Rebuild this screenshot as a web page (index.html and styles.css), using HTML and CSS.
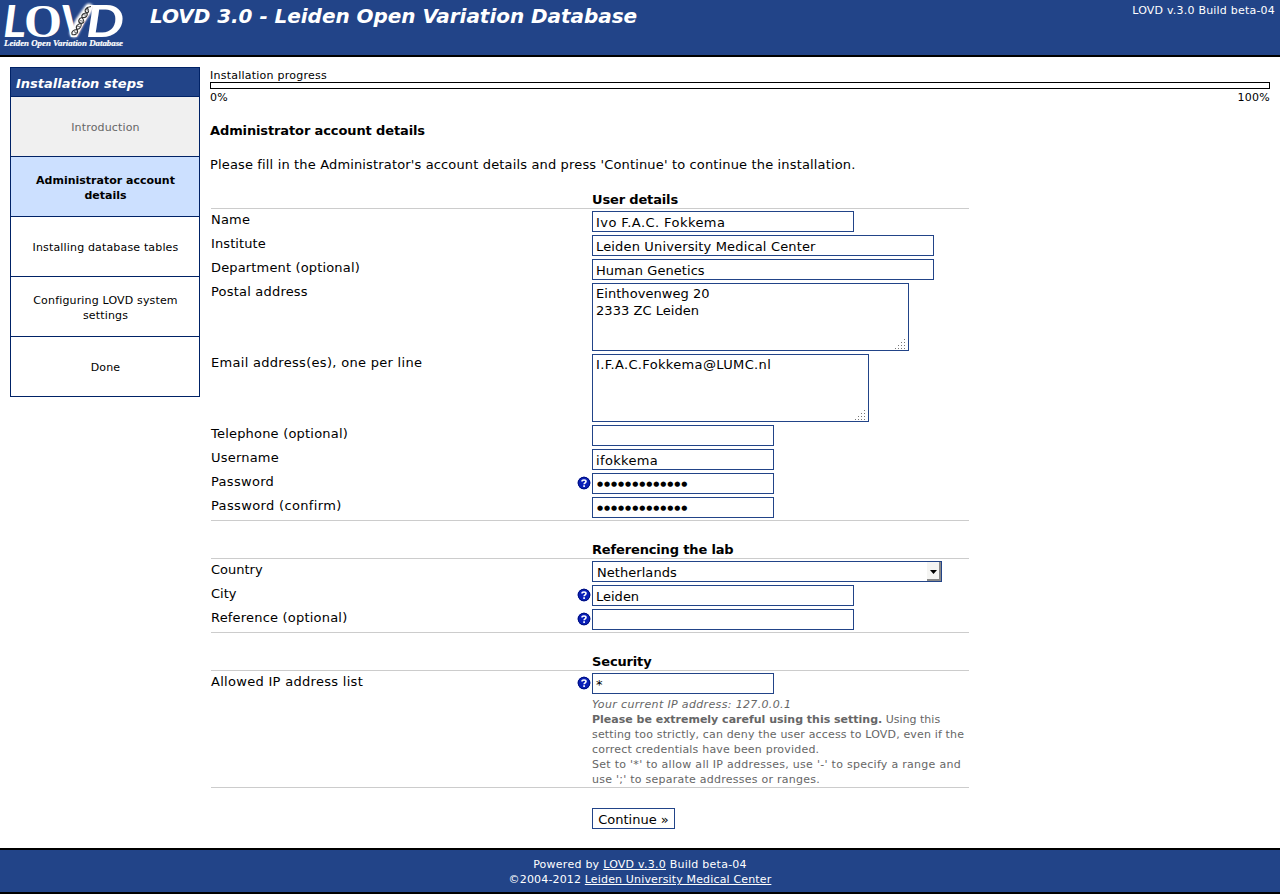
FILE: index.html
```html
<!DOCTYPE html>
<html lang="en">
<head>
<meta charset="utf-8">
<title>LOVD 3.0 - Leiden Open Variation Database</title>
<link rel="stylesheet" href="styles.css">
</head>
<body>
<svg class="defs" width="0" height="0" aria-hidden="true">
  <symbol id="help" viewBox="0 0 14 14">
    <circle cx="7" cy="7" r="6.3" fill="#0a1fb8"/>
    <circle cx="7" cy="7" r="5.8" fill="none" stroke="#00107e" stroke-width="1"/>
    <path d="M5 5.5C5 3.5 9 3.5 9 5.5C9 6.8 7.1 6.8 7.1 8.3" fill="none" stroke="#fff" stroke-width="1.6"/>
    <rect x="6.2" y="9.3" width="1.8" height="1.6" fill="#fff"/>
  </symbol>
  <symbol id="grip" viewBox="0 0 10 10">
    <path d="M9 0h1v1h-1zM6 3h1v1h-1zM9 3h1v1h-1zM3 6h1v1h-1zM6 6h1v1h-1zM9 6h1v1h-1zM0 9h1v1h-1zM3 9h1v1h-1zM6 9h1v1h-1zM9 9h1v1h-1z" fill="#777"/>
  </symbol>
</svg>
<header class="header">
  <svg class="logo" width="130" height="50" viewBox="0 0 130 50" role="img" aria-label="LOVD">
    <defs><filter id="glow" x="-50%" y="-50%" width="200%" height="200%"><feGaussianBlur stdDeviation="1.3"/></filter></defs>
    <g class="logo-big">
      <text x="3" y="37" textLength="23" lengthAdjust="spacingAndGlyphs">L</text>
      <text class="logo-o" x="24" y="36.5" textLength="38" lengthAdjust="spacingAndGlyphs">O</text>
      <text x="60" y="37" textLength="31" lengthAdjust="spacingAndGlyphs">V</text>
      <text x="86" y="37" textLength="38" lengthAdjust="spacingAndGlyphs">D</text>
    </g>
    <path d="M74 33L80 21L89 8" fill="none" stroke="#fff" stroke-width="9" stroke-linecap="round" filter="url(#glow)"/>
    <g fill="none" stroke="#333" stroke-width="1.2">
      <path d="M72 34.500C75 35.500 79 33 77 29.500C75 26 78 24 81 23.500C85 23 84 20 82 17.500C81 14 84 13 87 13C90 12 88 9 87 7"/>
      <path d="M72 34.500C71 31 74 30 77 29.500C80 29 82 26 81 23.500C77 22 79 18 82 17.500C86 18 88 16 87 13C83 11 86 7 91 6.500"/>
      <path d="M74 31.500l3 2M77 26l4 1M80 20.500l4 1M83 14.500l4 1M86 9.500l3 1" stroke="#777"/>
    </g>
    <text class="logo-small" x="4" y="46" textLength="119" lengthAdjust="spacingAndGlyphs">Leiden Open Variation Database</text>
  </svg>
  <h1 class="title">LOVD 3.0 - Leiden Open Variation Database</h1>
  <span class="version">LOVD v.3.0 Build beta-04</span>
</header>
<div class="page">
  <nav class="steps">
    <div class="steps-title">Installation steps</div>
    <div class="step done">Introduction</div>
    <div class="step active">Administrator account<br>details</div>
    <div class="step">Installing database tables</div>
    <div class="step">Configuring LOVD system<br>settings</div>
    <div class="step">Done</div>
  </nav>
  <main class="main">
    <div class="progress-label">Installation progress</div>
    <div class="progress"></div>
    <div class="scale"><span>0%</span><span>100%</span></div>
    <h2 class="heading">Administrator account details</h2>
    <p class="intro">Please fill in the Administrator's account details and press 'Continue' to continue the installation.</p>
    <form class="form">
      <h3 class="section-title">User details</h3>
      <section class="section">
        <div class="row"><label class="ls20">Name</label><span class="help"></span><div class="field w262 ls45">Ivo F.A.C. Fokkema</div></div>
        <div class="row"><label class="ls10">Institute</label><span class="help"></span><div class="field w342 ls15">Leiden University Medical Center</div></div>
        <div class="row"><label class="ls15">Department (optional)</label><span class="help"></span><div class="field w342 ls05">Human Genetics</div></div>
        <div class="row"><label class="ls20">Postal address</label><span class="help"></span><div class="field area w317 ls05">Einthovenweg 20<br>2333 ZC Leiden<svg class="grip"><use href="#grip"/></svg></div></div>
        <div class="row"><label class="ls30">Email address(es), one per line</label><span class="help"></span><div class="field area w277 ls35">I.F.A.C.Fokkema@LUMC.nl<svg class="grip"><use href="#grip"/></svg></div></div>
        <div class="row"><label class="ls20">Telephone (optional)</label><span class="help"></span><div class="field w182"></div></div>
        <div class="row"><label class="ls20">Username</label><span class="help"></span><div class="field w182 ls35">ifokkema</div></div>
        <div class="row"><label class="ls30">Password</label><span class="help"><svg><use href="#help"/></svg></span><div class="field password w182">●●●●●●●●●●●●●</div></div>
        <div class="row"><label class="ls35">Password (confirm)</label><span class="help"></span><div class="field password w182">●●●●●●●●●●●●●</div></div>
      </section>
      <h3 class="section-title">Referencing the lab</h3>
      <section class="section">
        <div class="row"><label>Country</label><span class="help"></span><div class="field select w350 ls05">Netherlands<span class="arrow"><svg width="7" height="4" viewBox="0 0 7 4"><path d="M0 0h7L3.5 4z"/></svg></span></div></div>
        <div class="row"><label>City</label><span class="help"><svg><use href="#help"/></svg></span><div class="field w262">Leiden</div></div>
        <div class="row"><label class="ls20">Reference (optional)</label><span class="help"><svg><use href="#help"/></svg></span><div class="field w262"></div></div>
      </section>
      <h3 class="section-title">Security</h3>
      <section class="section">
        <div class="row"><label class="ls30">Allowed IP address list</label><span class="help"><svg><use href="#help"/></svg></span><div class="field w182">*</div></div>
        <div class="note"><i class="ls35">Your current IP address: 127.0.0.1</i><br><b>Please be extremely careful using this setting.</b> Using this<br><span class="ls15">setting too strictly, can deny the user access to LOVD, even if the</span><br><span class="ls20">correct credentials have been provided.</span><br><span class="ls28">Set to '*' to allow all IP addresses, use '-' to specify a range and</span><br><span class="ls25">use ';' to separate addresses or ranges.</span></div>
      </section>
      <button class="continue" type="button">Continue »</button>
    </form>
  </main>
</div>
<footer class="footer">
  <div class="ls25">Powered by <a href="#">LOVD v.3.0</a> Build beta-04</div>
  <div class="ls15">©2004-2012 <a href="#">Leiden University Medical Center</a></div>
</footer>
</body>
</html>
```
FILE: styles.css
```css
* { box-sizing: border-box; }
body {
  margin: 0;
  height: 894px;
  display: flex;
  flex-direction: column;
  background: #fff;
  color: #000;
  font: 13px/17px "DejaVu Sans", sans-serif;
  white-space: nowrap;
}
.defs { position: absolute; }
h1, h2, h3, p { margin: 0; }
.header {
  flex: none;
  height: 57px;
  display: flex;
  align-items: flex-start;
  background: #224488;
  border-bottom: 2px solid #000;
  color: #fff;
}
.logo { flex: none; }
.logo-big { font: italic bold 43px Lato, sans-serif; fill: #fff; }
.logo-o { font: normal bold 46px "Liberation Serif", serif; }
.logo-small { font: italic bold 8.5px "Liberation Serif", serif; fill: #fff; stroke: #fff; stroke-width: 0.2px; }
.title { margin: 4px 0 0 20px; font: italic bold 20px/24px "DejaVu Sans", sans-serif; letter-spacing: -0.04px; }
.version { margin: 3px 5px 0 auto; font-size: 11px; line-height: 15px; letter-spacing: 0.21px; }
.page { flex: 1; display: flex; align-items: flex-start; gap: 10px; padding: 10px 10px 0; }
.steps { flex: none; width: 190px; border: 1px solid #002266; border-top-width: 0; font-size: 11px; line-height: 15px; }
.steps-title {
  height: 30px;
  padding: 1px 5px 0;
  border: solid #002266;
  border-width: 1px 0;
  background: #224488;
  color: #fff;
  font: italic bold 13px/30px "DejaVu Sans", sans-serif;
}
.step {
  height: 60px;
  padding: 2px 0 0 1px;
  display: flex;
  align-items: center;
  justify-content: center;
  text-align: center;
  border-bottom: 1px solid #002266;
  letter-spacing: 0.16px;
}
.step:last-child { height: 59px; border: 0; }
.done { background: #f0f0f0; color: #666; }
.active { background: #cce0ff; font-weight: bold; letter-spacing: 0; }
.main { flex: 1; }
.progress-label { height: 15px; padding-top: 1px; font-size: 11px; line-height: 15px; letter-spacing: 0.24px; }
.progress { height: 7px; border: 1px solid #000; }
.scale { display: flex; justify-content: space-between; padding-top: 1px; font-size: 11px; line-height: 15px; letter-spacing: 0.25px; }
.heading { margin-top: 17px; font-size: 13px; line-height: 17px; letter-spacing: -0.12px; }
.intro { margin-top: 17px; letter-spacing: 0.15px; }
.form { width: 758px; margin: 16px 0 0 1px; }
.section-title { height: 19px; padding: 1px 0 0 381px; font-size: 13px; line-height: 20px; letter-spacing: -0.15px; }
.section { border: solid #ccc; border-width: 1px 0; padding-top: 1px; margin-bottom: 18px; }
.row { display: flex; align-items: flex-start; padding: 1px 0 2px; }
.row label { width: 366px; line-height: 17px; }
.help { width: 15px; height: 14px; padding-top: 3px; }
.help svg { display: block; width: 14px; height: 14px; }
.field { height: 21px; padding: 2px 3px 0; border: 1px solid #224488; line-height: 17px; background: #fff; }
.area { position: relative; height: 68px; padding-top: 1px; }
.grip { position: absolute; right: 3px; bottom: 1px; width: 10px; height: 10px; }
.password { font-size: 7px; line-height: 17px; letter-spacing: 0.92px; padding-left: 4px; }
.select { display: flex; justify-content: space-between; padding: 0 0 0 4px; line-height: 21px; }
.arrow { width: 14px; height: 19px; padding-top: 2px; display: flex; align-items: center; justify-content: center; background: #f5f5f3; border: solid #888; border-width: 0 2px 2px 0; }
.w182 { width: 182px; }
.w262 { width: 262px; }
.w277 { width: 277px; }
.w317 { width: 317px; }
.w342 { width: 342px; }
.w350 { width: 350px; }
.ls05 { letter-spacing: 0.05px; }
.ls10 { letter-spacing: 0.1px; }
.ls15 { letter-spacing: 0.155px; }
.ls20 { letter-spacing: 0.2px; }
.ls25 { letter-spacing: 0.25px; }
.ls28 { letter-spacing: 0.28px; }
.ls30 { letter-spacing: 0.3px; }
.ls35 { letter-spacing: 0.35px; }
.ls45 { letter-spacing: 0.44px; }
.note { padding: 1px 0 0 381px; color: #666; font-size: 11px; line-height: 15px; }
.continue {
  display: block;
  height: 21px;
  width: 83px;
  margin: 20px 0 0 381px;
  padding: 2px 0 0;
  border: 1px solid #224488;
  background: #fff;
  color: #000;
  font: 13px/17px "DejaVu Sans", sans-serif;
}
.footer {
  flex: none;
  height: 46px;
  padding-top: 7px;
  border: solid #000;
  border-width: 2px 0;
  background: #224488;
  color: #fff;
  text-align: center;
  font-size: 11px;
  line-height: 15px;
}
.footer a { color: #fff; }
```
